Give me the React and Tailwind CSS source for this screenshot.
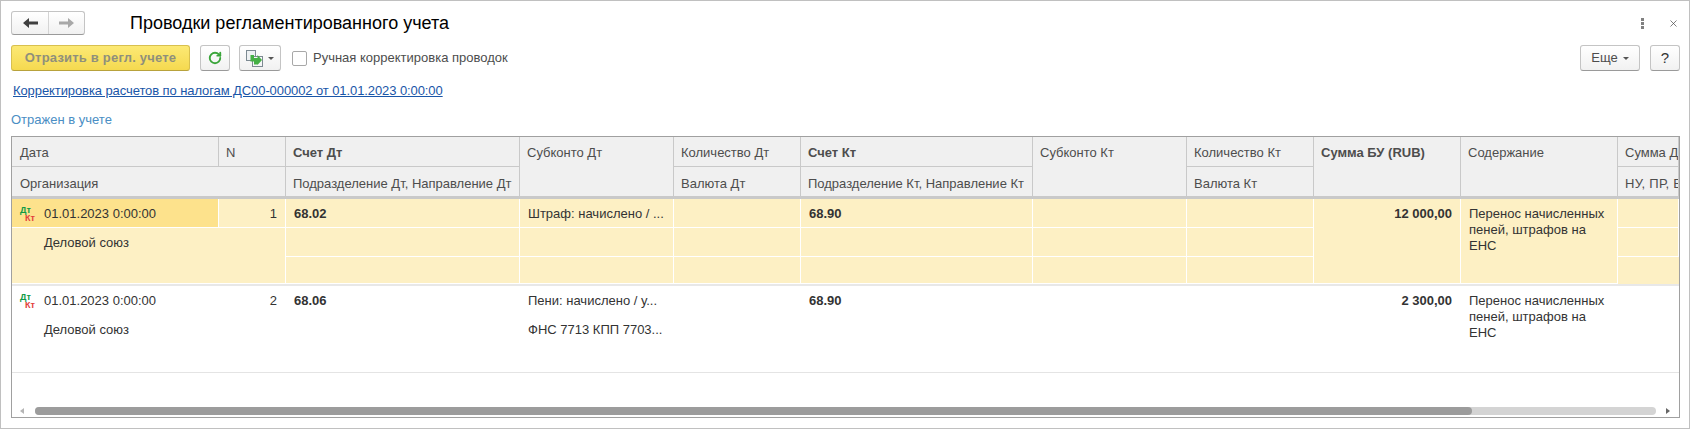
import { X, RotateCw } from 'lucide-react';

const COLUMNS = 'grid-cols-[207px_67px_234px_154px_127px_232px_154px_127px_147px_157px_61px]';
const HEAD = 'bg-[#f0f0f0] border-r border-b border-[#c9c9c9] px-[7px] pt-[6px] text-[#4d4d4d] whitespace-nowrap overflow-hidden';

function HeadCell({ className = '', children }) {
  return <div className={`${HEAD} ${className}`}>{children}</div>;
}

/** Маленькая пиктограмма проводки: Дт зеленым, Кт красным. */
function EntryIcon() {
  return (
    <span className="flex flex-col w-[24px] shrink-0 text-[9px] leading-[8px] font-bold">
      <span className="text-[#0f9a46]">Дт</span>
      <span className="text-[#e2403c] ml-[5px]">Кт</span>
    </span>
  );
}

function EntryRow({ active, num, debit, sub1, sub2, credit, sum, rows }) {
  const line = active ? 'border-r border-b border-white' : 'border-r border-b border-transparent';
  const bg = active ? 'bg-[#fdf0c4]' : 'bg-white';
  const cell = `${line} px-[8px] whitespace-nowrap overflow-hidden leading-[30px]`;
  return (
    <div className={`grid ${COLUMNS} ${rows} ${bg} text-[#333333]`}>
      <div className={`${cell} flex items-center pl-[8px] pt-[2px] ${active ? 'bg-[#fde28c]' : ''}`}>
        <EntryIcon />
        <span>01.01.2023 0:00:00</span>
      </div>
      <div className={`${cell} text-right`}>{num}</div>
      <div className={`${cell} font-bold`}>{debit}</div>
      <div className={cell}>{sub1}</div>
      <div className={cell} />
      <div className={`${cell} font-bold`}>{credit}</div>
      <div className={cell} />
      <div className={cell} />
      <div className={`${cell} row-span-3 text-right font-bold`}>{sum}</div>
      <div className={`${line} row-span-3 px-[8px] pt-[7px] leading-[16px]`}>
        Перенос начисленных пеней, штрафов на ЕНС
      </div>
      <div className={cell} />
      <div className={`${cell} col-span-2 row-span-2 pl-[32px]`}>Деловой союз</div>
      <div className={cell} />
      <div className={cell}>{sub2}</div>
      <div className={cell} />
      <div className={cell} />
      <div className={cell} />
      <div className={cell} />
      <div className={cell} />
      <div className={cell} />
      <div className={cell} />
      <div className={cell} />
      <div className={cell} />
      <div className={cell} />
      <div className={cell} />
    </div>
  );
}

function NavButtons() {
  return (
    <div className="flex w-[74px] h-[24px] rounded-[3px] border border-[#c4c4c4] border-b-[#9a9a9a] bg-linear-to-b from-white to-[#f1f1f1]">
      <div className="flex w-[37px] items-center justify-center border-r border-[#d4d4d4]">
        <svg width="15" height="12" viewBox="0 0 15 12"><path d="M0 6 L6 1 V4.5 H15 V7.5 H6 V11 Z" fill="#404040" /></svg>
      </div>
      <div className="flex flex-1 items-center justify-center">
        <svg width="15" height="12" viewBox="0 0 15 12"><path d="M15 6 L9 1 V4.5 H0 V7.5 H9 V11 Z" fill="#a8a8a8" /></svg>
      </div>
    </div>
  );
}

function Caret() {
  return <span className="w-0 h-0 border-x-[3px] border-x-transparent border-t-[3px] border-t-[#555555]" />;
}

function ToolButton({ className = '', children }) {
  return (
    <div className={`flex h-[26px] items-center justify-center rounded-[3px] border border-[#c4c4c4] border-b-[#9a9a9a] bg-linear-to-b from-white to-[#f1f1f1] ${className}`}>
      {children}
    </div>
  );
}

export default function App() {
  return (
    <div className="w-[1690px] h-[429px] border border-[#c0c0c0] bg-white px-[10px] pt-[10px] font-['Liberation_Sans',Arial,sans-serif] text-[13px] text-[#333333]">
      {/* Заголовок формы */}
      <div className="flex items-center h-[24px]">
        <NavButtons />
        <h1 className="ml-[45px] text-[18px] text-black">Проводки регламентированного учета</h1>
        <div className="ml-auto flex items-center">
          <svg width="3" height="11" viewBox="0 0 3 11" className="mr-[24px]">
            <rect y="0" width="3" height="3" fill="#808080" />
            <rect y="4" width="3" height="3" fill="#808080" />
            <rect y="8" width="3" height="3" fill="#808080" />
          </svg>
          <X size={11} strokeWidth={1.5} color="#444444" />
        </div>
      </div>

      {/* Командная панель */}
      <div className="flex items-center mt-[10px] h-[26px]">
        <div className="flex h-[26px] w-[179px] items-center justify-center rounded-[3px] border border-[#d8c04f] border-b-[#b8a23c] bg-linear-to-b from-[#fce974] to-[#f5d94f] font-bold text-[#8f8f7c] tracking-[0.2px]">
          Отразить в регл. учете
        </div>
        <ToolButton className="ml-[10px] w-[30px]">
          <RotateCw size={14} strokeWidth={3.2} color="#3aa53a" />
        </ToolButton>
        <ToolButton className="ml-[9px] w-[42px] gap-[5px]">
          <svg width="17" height="17" viewBox="0 0 17 17">
            <rect x="0.5" y="0.5" width="9" height="10" fill="#eef1f3" stroke="#7d8a92" />
            <rect x="6.5" y="6.5" width="10" height="10" fill="#f6f7f8" stroke="#7d8a92" />
            <path d="M11.5 14.5 H8 V11.5 H4.5 V5 H8 V8 H11.5 V5 L16 10 L11.5 15 Z" fill="#45b045" />
          </svg>
          <Caret />
        </ToolButton>
        <span className="ml-[11px] w-[15px] h-[15px] rounded-[2px] border border-[#a8a8a8] bg-white" />
        <span className="ml-[6px] text-[#4d4d4d]">Ручная корректировка проводок</span>
        <ToolButton className="ml-auto w-[60px] gap-[5px] text-[#4d4d4d]">
          Еще <Caret />
        </ToolButton>
        <ToolButton className="ml-[10px] -mr-[1px] w-[30px] text-[15px]">?</ToolButton>
      </div>

      <div className="mt-[12px] ml-[2px] h-[16px] leading-[16px]">
        <span className="text-[#1a56a8] underline tracking-[-0.09px]">Корректировка расчетов по налогам ДС00-000002 от 01.01.2023 0:00:00</span>
      </div>
      <div className="mt-[13px] h-[16px] leading-[16px] text-[#4a8ec4]">Отражен в учете</div>

      {/* Таблица проводок */}
      <div className="mt-[8px] flex flex-col w-[1669px] h-[282px] border border-[#a0a0a0] overflow-hidden">
        <div className={`grid ${COLUMNS} grid-rows-[30px_30px] border-b-2 border-[#c9c9c9]`}>
          <HeadCell className="pl-[8px]">Дата</HeadCell>
          <HeadCell>N</HeadCell>
          <HeadCell className="font-bold">Счет Дт</HeadCell>
          <HeadCell className="row-span-2">Субконто Дт</HeadCell>
          <HeadCell>Количество Дт</HeadCell>
          <HeadCell className="font-bold">Счет Кт</HeadCell>
          <HeadCell className="row-span-2">Субконто Кт</HeadCell>
          <HeadCell>Количество Кт</HeadCell>
          <HeadCell className="row-span-2 font-bold">Сумма БУ (RUB)</HeadCell>
          <HeadCell className="row-span-2">Содержание</HeadCell>
          <HeadCell>Сумма Дт</HeadCell>
          <HeadCell className="col-span-2 pl-[8px] pt-[7px]">Организация</HeadCell>
          <HeadCell className="pt-[7px]">Подразделение Дт, Направление Дт</HeadCell>
          <HeadCell className="pt-[7px]">Валюта Дт</HeadCell>
          <HeadCell className="pt-[7px]">Подразделение Кт, Направление Кт</HeadCell>
          <HeadCell className="pt-[7px]">Валюта Кт</HeadCell>
          <HeadCell className="pt-[7px] tracking-[0.3px]">НУ, ПР, ВР</HeadCell>
        </div>
        <div className="border-b-2 border-[#e8e8e8]">
          <EntryRow active rows="grid-rows-[29px_29px_27px]" num="1" debit="68.02" sub1="Штраф: начислено / ..." credit="68.90" sum="12 000,00" />
        </div>
        <div className="border-b border-[#e4e4e4]">
          <EntryRow rows="grid-rows-[29px_29px_28px]" num="2" debit="68.06" sub1="Пени: начислено / у..." sub2="ФНС 7713 КПП 7703..." credit="68.90" sum="2 300,00" />
        </div>

        {/* Горизонтальная прокрутка */}
        <div className="mt-auto mb-[2px] flex items-center h-[8px] pl-[8px] pr-[9px]">
          <span className="w-0 h-0 border-y-[3px] border-y-transparent border-r-[4px] border-r-[#b5b5b5]" />
          <div className="ml-[11px] flex-1 h-[8px] rounded-[4px] bg-[#d4d4d4]">
            <div className="w-[1437px] h-[8px] rounded-[4px] bg-[#9c9c9c]" />
          </div>
          <span className="ml-[10px] w-0 h-0 border-y-[3px] border-y-transparent border-l-[4px] border-l-[#666666]" />
        </div>
      </div>
    </div>
  );
}
